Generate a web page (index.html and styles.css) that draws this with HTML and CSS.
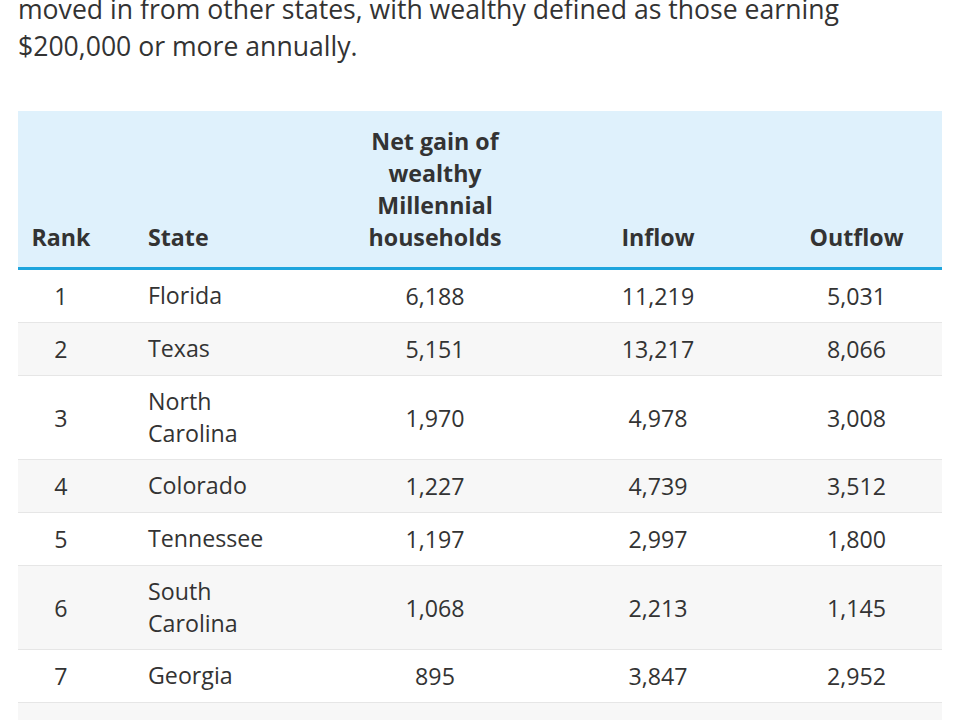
FILE: index.html
```html
<!DOCTYPE html>
<html lang="en">
<head>
<meta charset="utf-8">
<title>Wealthy Millennial households</title>
<link rel="stylesheet" href="styles.css">
</head>
<body>
<div class="article">
  <p class="intro">moved in from other states, with wealthy defined as those earning $200,000 or more annually.</p>
  <table class="data">
    <colgroup>
      <col class="c-rank">
      <col class="c-state">
      <col class="c-net">
      <col class="c-in">
      <col class="c-out">
    </colgroup>
    <thead>
      <tr>
        <th class="center rank">Rank</th>
        <th class="state">State</th>
        <th class="center">Net gain of wealthy Millennial households</th>
        <th class="center">Inflow</th>
        <th class="center">Outflow</th>
      </tr>
    </thead>
    <tbody>
      <tr><td class="center">1</td><td class="state">Florida</td><td class="center">6,188</td><td class="center">11,219</td><td class="center">5,031</td></tr>
      <tr><td class="center">2</td><td class="state">Texas</td><td class="center">5,151</td><td class="center">13,217</td><td class="center">8,066</td></tr>
      <tr><td class="center">3</td><td class="state">North Carolina</td><td class="center">1,970</td><td class="center">4,978</td><td class="center">3,008</td></tr>
      <tr><td class="center">4</td><td class="state">Colorado</td><td class="center">1,227</td><td class="center">4,739</td><td class="center">3,512</td></tr>
      <tr><td class="center">5</td><td class="state">Tennessee</td><td class="center">1,197</td><td class="center">2,997</td><td class="center">1,800</td></tr>
      <tr><td class="center">6</td><td class="state">South Carolina</td><td class="center">1,068</td><td class="center">2,213</td><td class="center">1,145</td></tr>
      <tr><td class="center">7</td><td class="state">Georgia</td><td class="center">895</td><td class="center">3,847</td><td class="center">2,952</td></tr>
      <tr><td class="center">8</td><td class="state">Arizona</td><td class="center">870</td><td class="center">3,120</td><td class="center">2,250</td></tr>
    </tbody>
  </table>
</div>
</body>
</html>
```

FILE: styles.css
```css
html, body {
  margin: 0;
  padding: 0;
  background: #ffffff;
  overflow: hidden;
}

body {
  font-family: "Open Sans", "Noto Sans", "Liberation Sans", sans-serif;
  color: #333333;
}

.article {
  padding: 0 18px;
  margin-top: -9px;
}

.intro {
  margin: 0 0 46px 0;
  font-size: 26.6px;
  line-height: 37px;
  color: #333333;
  width: 880px;
}

.data {
  width: 924px;
  border-collapse: collapse;
  table-layout: fixed;
  font-size: 23.2px;
  line-height: 32px;
}

.c-rank { width: 86px; }
.c-state { width: 229px; }
.c-net { width: 204px; }
.c-in { width: 242px; }
.c-out { width: 163px; }

.data thead th {
  background: #dff1fc;
  font-weight: 700;
  color: #333333;
  vertical-align: bottom;
  padding: 14px 12px 14px 12px;
  border-bottom: 3px solid #1ea5dd;
}

.data td {
  padding: 10px 10px;
  vertical-align: middle;
  border-bottom: 1px solid #e6e6e6;
  color: #333333;
}

.data tbody tr:nth-child(even) td {
  background: #f7f7f7;
}

.center { text-align: center; }

.data th.state,
.data td.state {
  text-align: left;
  padding-left: 44px;
  padding-right: 40px;
}

.data td.state { line-height: 31.5px; }

.data td.center { padding-left: 4px; padding-right: 4px; }
.data th.center { padding-left: 24px; padding-right: 24px; }
.data th.rank { padding-left: 0; padding-right: 0; }
.data th.center:last-child { padding-left: 20px; padding-right: 28px; }
.data td.center:last-child { padding-left: 0; padding-right: 8px; }
```
